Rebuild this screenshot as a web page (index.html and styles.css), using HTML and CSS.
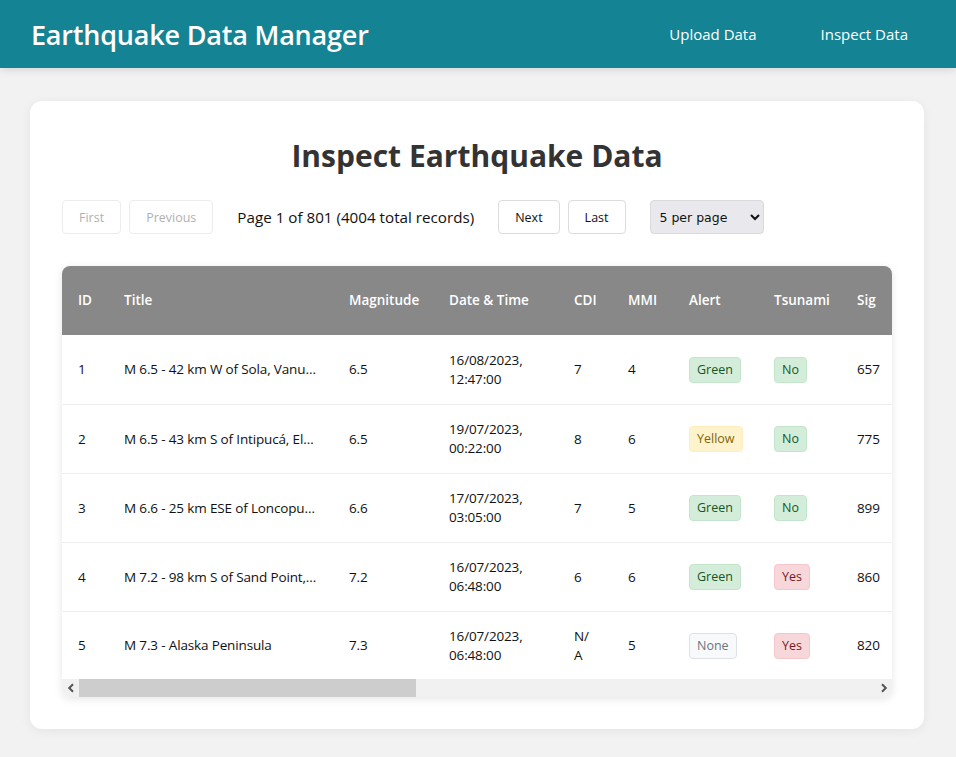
FILE: index.html
```html
<!DOCTYPE html>
<html lang="en">
<head>
<meta charset="utf-8">
<title>Earthquake Data Manager</title>
<link rel="stylesheet" href="styles.css">
</head>
<body>
<header class="topbar">
  <div class="brand">Earthquake Data Manager</div>
  <nav class="nav">
    <a class="nav-link" href="#">Upload Data</a>
    <a class="nav-link" href="#">Inspect Data</a>
  </nav>
</header>
<main class="card">
  <h2 class="page-title">Inspect Earthquake Data</h2>
  <div class="pagination">
    <div class="btn-group">
      <button class="btn" disabled>First</button>
      <button class="btn" disabled>Previous</button>
    </div>
    <span class="page-info">Page 1 of 801 (4004 total records)</span>
    <div class="btn-group">
      <button class="btn">Next</button>
      <button class="btn">Last</button>
    </div>
    <select class="per-page">
      <option>5 per page</option>
      <option>10 per page</option>
      <option>25 per page</option>
    </select>
  </div>
  <div class="table-wrap">
    <div class="table-viewport">
      <table class="data-table">
        <colgroup>
          <col class="c-id"><col class="c-title"><col class="c-mag"><col class="c-date"><col class="c-cdi"><col class="c-mmi"><col class="c-alert"><col class="c-tsu"><col class="c-sig"><col class="c-depth"><col class="c-lat"><col class="c-lon"><col class="c-loc"><col class="c-cont"><col class="c-country"><col class="c-net"><col class="c-nst"><col class="c-dmin"><col class="c-gap"><col class="c-magtype">
        </colgroup>
        <thead>
          <tr>
            <th>ID</th><th>Title</th><th>Magnitude</th><th>Date &amp; Time</th><th>CDI</th><th>MMI</th><th>Alert</th><th>Tsunami</th><th>Sig</th><th>Depth</th><th>Latitude</th><th>Longitude</th><th>Location</th><th>Continent</th><th>Country</th><th>Net</th><th>Nst</th><th>Dmin</th><th>Gap</th><th>Mag Type</th>
          </tr>
        </thead>
        <tbody>
          <tr>
            <td>1</td><td class="title-cell"><span class="title-text">M 6.5 - 42 km W of Sola, Vanuatu</span></td><td>6.5</td><td>16/08/2023, 12:47:00</td><td>7</td><td>4</td>
            <td><span class="badge badge-green">Green</span></td><td><span class="badge badge-green">No</span></td><td>657</td>
            <td>192.96</td><td>-13.8814</td><td>167.158</td><td>Sola, Vanuatu</td><td>Oceania</td><td>Vanuatu</td><td>us</td><td>117</td><td>0.509</td><td>17</td><td>mww</td>
          </tr>
          <tr>
            <td>2</td><td class="title-cell"><span class="title-text">M 6.5 - 43 km S of Intipucá, El Salvador</span></td><td>6.5</td><td>19/07/2023, 00:22:00</td><td>8</td><td>6</td>
            <td><span class="badge badge-yellow">Yellow</span></td><td><span class="badge badge-green">No</span></td><td>775</td>
            <td>69.727</td><td>12.814</td><td>-88.1265</td><td>Intipucá, El Salvador</td><td></td><td></td><td>us</td><td>99</td><td>2.229</td><td>34</td><td>mww</td>
          </tr>
          <tr>
            <td>3</td><td class="title-cell"><span class="title-text">M 6.6 - 25 km ESE of Loncopué, Argentina</span></td><td>6.6</td><td>17/07/2023, 03:05:00</td><td>7</td><td>5</td>
            <td><span class="badge badge-green">Green</span></td><td><span class="badge badge-green">No</span></td><td>899</td>
            <td>171.371</td><td>-38.1911</td><td>-70.3731</td><td>Loncopué, Argentina</td><td>South America</td><td>Argentina</td><td>us</td><td>147</td><td>3.125</td><td>18</td><td>mww</td>
          </tr>
          <tr>
            <td>4</td><td class="title-cell"><span class="title-text">M 7.2 - 98 km S of Sand Point, Alaska</span></td><td>7.2</td><td>16/07/2023, 06:48:00</td><td>6</td><td>6</td>
            <td><span class="badge badge-green">Green</span></td><td><span class="badge badge-red">Yes</span></td><td>860</td>
            <td>32.571</td><td>54.3844</td><td>-160.699</td><td>Sand Point, Alaska</td><td></td><td></td><td>us</td><td>0</td><td>0.19</td><td>38</td><td>mww</td>
          </tr>
          <tr>
            <td>5</td><td class="title-cell"><span class="title-text">M 7.3 - Alaska Peninsula</span></td><td>7.3</td><td>16/07/2023, 06:48:00</td><td class="cdi-na">N/A</td><td>5</td>
            <td><span class="badge badge-none">None</span></td><td><span class="badge badge-red">Yes</span></td><td>820</td>
            <td>21</td><td>54.49</td><td>-160.796</td><td>Alaska Peninsula</td><td></td><td></td><td>at</td><td>36</td><td>0.173</td><td>36</td><td>mww</td>
          </tr>
        </tbody>
      </table>
    </div>
    <div class="hscroll">
      <span class="hs-btn">
        <svg width="8" height="10" viewBox="0 0 8 10"><path d="M6 1.2 L2.2 5 L6 8.8" fill="none" stroke="#555" stroke-width="2"/></svg>
      </span>
      <div class="hs-track"><div class="hs-thumb"></div></div>
      <span class="hs-btn">
        <svg width="8" height="10" viewBox="0 0 8 10"><path d="M2 1.2 L5.8 5 L2 8.8" fill="none" stroke="#555" stroke-width="2"/></svg>
      </span>
    </div>
  </div>
</main>
</body>
</html>
```

FILE: styles.css
```css
* { box-sizing: border-box; }

html, body {
  margin: 0;
  padding: 0;
}

body {
  background: #f2f2f2;
  font-family: "Open Sans", "Noto Sans", sans-serif;
  color: #222;
  height: 757px;
  overflow: hidden;
}

.topbar {
  height: 68px;
  background: #148494;
  display: flex;
  align-items: center;
  justify-content: space-between;
  padding: 0 32px 0 31px;
  box-shadow: 0 2px 8px rgba(0, 0, 0, 0.12);
  position: relative;
}

.brand {
  color: #fff;
  font-size: 27px;
  font-weight: 600;
  letter-spacing: -0.2px;
}

.nav {
  display: flex;
  gap: 32px;
}

.nav-link {
  color: #fff;
  text-decoration: none;
  font-size: 15px;
  padding: 8px 16px;
}

.card {
  display: block;
  margin: 33px 32px 0 30px;
  background: #fff;
  border-radius: 12px;
  box-shadow: 0 2px 12px rgba(0, 0, 0, 0.06);
  padding: 32px 32px 32px;
}

.page-title {
  margin: 3px 0 24px;
  text-align: center;
  font-size: 30px;
  font-weight: 700;
  color: #333;
  line-height: 40px;
}

.pagination {
  display: flex;
  align-items: center;
  gap: 24px;
  margin-bottom: 32px;
}

.btn-group {
  display: flex;
  gap: 8px;
}

.btn {
  height: 34px;
  padding: 0 16px;
  font-family: inherit;
  font-size: 12.5px;
  color: #111;
  background: #fff;
  border: 1px solid #dcdcdc;
  border-radius: 4px;
}

.btn:disabled {
  color: #b0b0b0;
  border-color: #ececec;
}

.page-info {
  font-size: 15.2px;
  color: #111;
}

.per-page {
  width: 114px;
  height: 34px;
  padding: 0 5px;
  font-family: "DejaVu Sans", sans-serif;
  font-size: 12.5px;
  background: #e9e9ed;
  border: 1px solid #dadade;
  border-radius: 4px;
  color: #111;
}

.table-wrap {
  overflow: hidden;
  border-radius: 8px;
  box-shadow: 0 2px 8px rgba(0, 0, 0, 0.1);
}

.table-viewport {
  overflow: hidden;
}

.data-table {
  table-layout: fixed;
  width: 1960px;
  border-collapse: collapse;
  font-size: 13.5px;
  line-height: 19px;
}

.c-id { width: 46px; }
.c-title { width: 225px; }
.c-mag { width: 100px; }
.c-date { width: 125px; }
.c-cdi { width: 54px; }
.c-mmi { width: 61px; }
.c-alert { width: 85px; }
.c-tsu { width: 83px; }
.c-sig { width: 62px; }
.c-depth { width: 80px; }
.c-lat { width: 90px; }
.c-lon { width: 100px; }
.c-loc { width: 229px; }
.c-cont { width: 110px; }
.c-country { width: 150px; }
.c-net { width: 60px; }
.c-nst { width: 60px; }
.c-dmin { width: 80px; }
.c-gap { width: 60px; }
.c-magtype { width: 100px; }

.data-table th {
  background: #888;
  color: #fff;
  font-weight: 600;
  text-align: left;
  padding: 25px 16px 25px;
  white-space: nowrap;
}

.data-table td {
  padding: 15px 16px 14px;
  height: 69px;
  border-bottom: 1px solid #eee;
  color: #111;
  letter-spacing: -0.15px;
}

.data-table td.cdi-na {
  overflow-wrap: anywhere;
}

.data-table tbody tr:last-child td {
  border-bottom: none;
  height: 67px;
}

.title-text {
  display: block;
  white-space: nowrap;
  overflow: hidden;
  text-overflow: ellipsis;
}

.badge {
  display: inline-block;
  white-space: nowrap;
  padding: 4px 7px;
  font-size: 12.5px;
  line-height: 16px;
  border-radius: 4px;
  border: 1px solid;
  letter-spacing: 0;
}

.badge-green {
  background: #d4edda;
  border-color: #c3e6cb;
  color: #155724;
}

.badge-yellow {
  background: #fff3cd;
  border-color: #ffeeba;
  color: #856404;
}

.badge-red {
  background: #f8d7da;
  border-color: #f5c6cb;
  color: #721c24;
}

.badge-none {
  background: #f8f9fa;
  border-color: #dee2e6;
  color: #6c757d;
}

.hscroll {
  display: flex;
  height: 18px;
  background: #f1f1f1;
}

.hs-btn {
  width: 17px;
  display: flex;
  align-items: center;
  justify-content: center;
}

.hs-track {
  flex: 1;
  display: flex;
}

.hs-thumb {
  width: 337px;
  background: #cdcdcd;
}
```
